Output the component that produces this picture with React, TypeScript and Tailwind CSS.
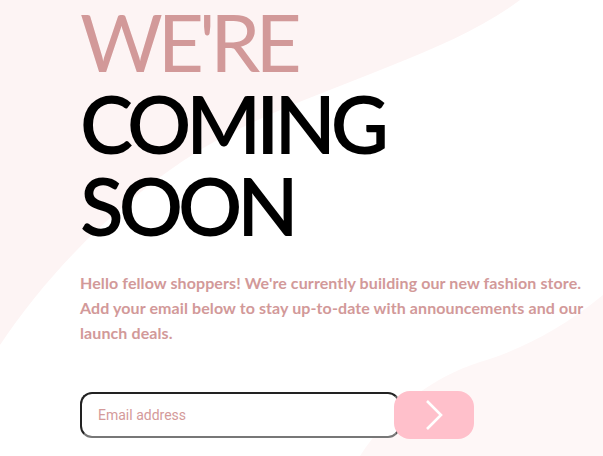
export default function App() {
  return (
    <div className="relative h-[456px] w-full overflow-hidden bg-white">
      <svg className="absolute inset-0 h-full w-full" viewBox="0 0 603 456" preserveAspectRatio="none">
        <path d="M0 0 H520 C440 60 300 90 200 150 C120 200 50 270 0 345 Z" fill="#fdf4f4" />
        <path d="M603 295 C560 330 520 350 480 362 C430 378 390 410 360 456 H603 Z" fill="#fef7f7" />
      </svg>
      <div className="relative pl-20">
        <h1 className="text-[80px] leading-[82px] uppercase tracking-[-5px]" style={{ fontFamily: "Lato, sans-serif" }}>
          <span className="block font-normal text-[#d29999]">We're</span>
          <span className="block font-semibold text-black">Coming</span>
          <span className="block font-semibold text-black">Soon</span>
        </h1>
        <p
          className="mt-[24px] w-[512px] text-[16px] leading-[25px] font-bold tracking-[0.1px] text-[#d29999]"
          style={{ fontFamily: "Lato, sans-serif" }}
        >
          Hello fellow shoppers! We're currently building our new fashion store. Add your email below to stay up-to-date with announcements and our launch deals.
        </p>
        <div className="mt-[46px] flex items-center">
          <input
            type="email"
            placeholder="Email address"
            className="h-[46px] w-[320px] rounded-[12px] border-2 border-t-[#222] border-l-[#222] border-b-[#777] border-r-[#555] bg-white pl-4 text-[14px] text-[#333] outline-none placeholder:text-[#d49a9a]"
            style={{ fontFamily: "Roboto, sans-serif" }}
          />
          <button className="-ml-[6px] flex h-[48px] w-[80px] items-center justify-center rounded-[16px] bg-[#ffc0cb]">
            <svg width="20" height="32" viewBox="0 0 20 32" fill="none">
              <path d="M3 2 L17 16 L3 30" stroke="white" strokeWidth="2.6" />
            </svg>
          </button>
        </div>
      </div>
    </div>
  );
}
